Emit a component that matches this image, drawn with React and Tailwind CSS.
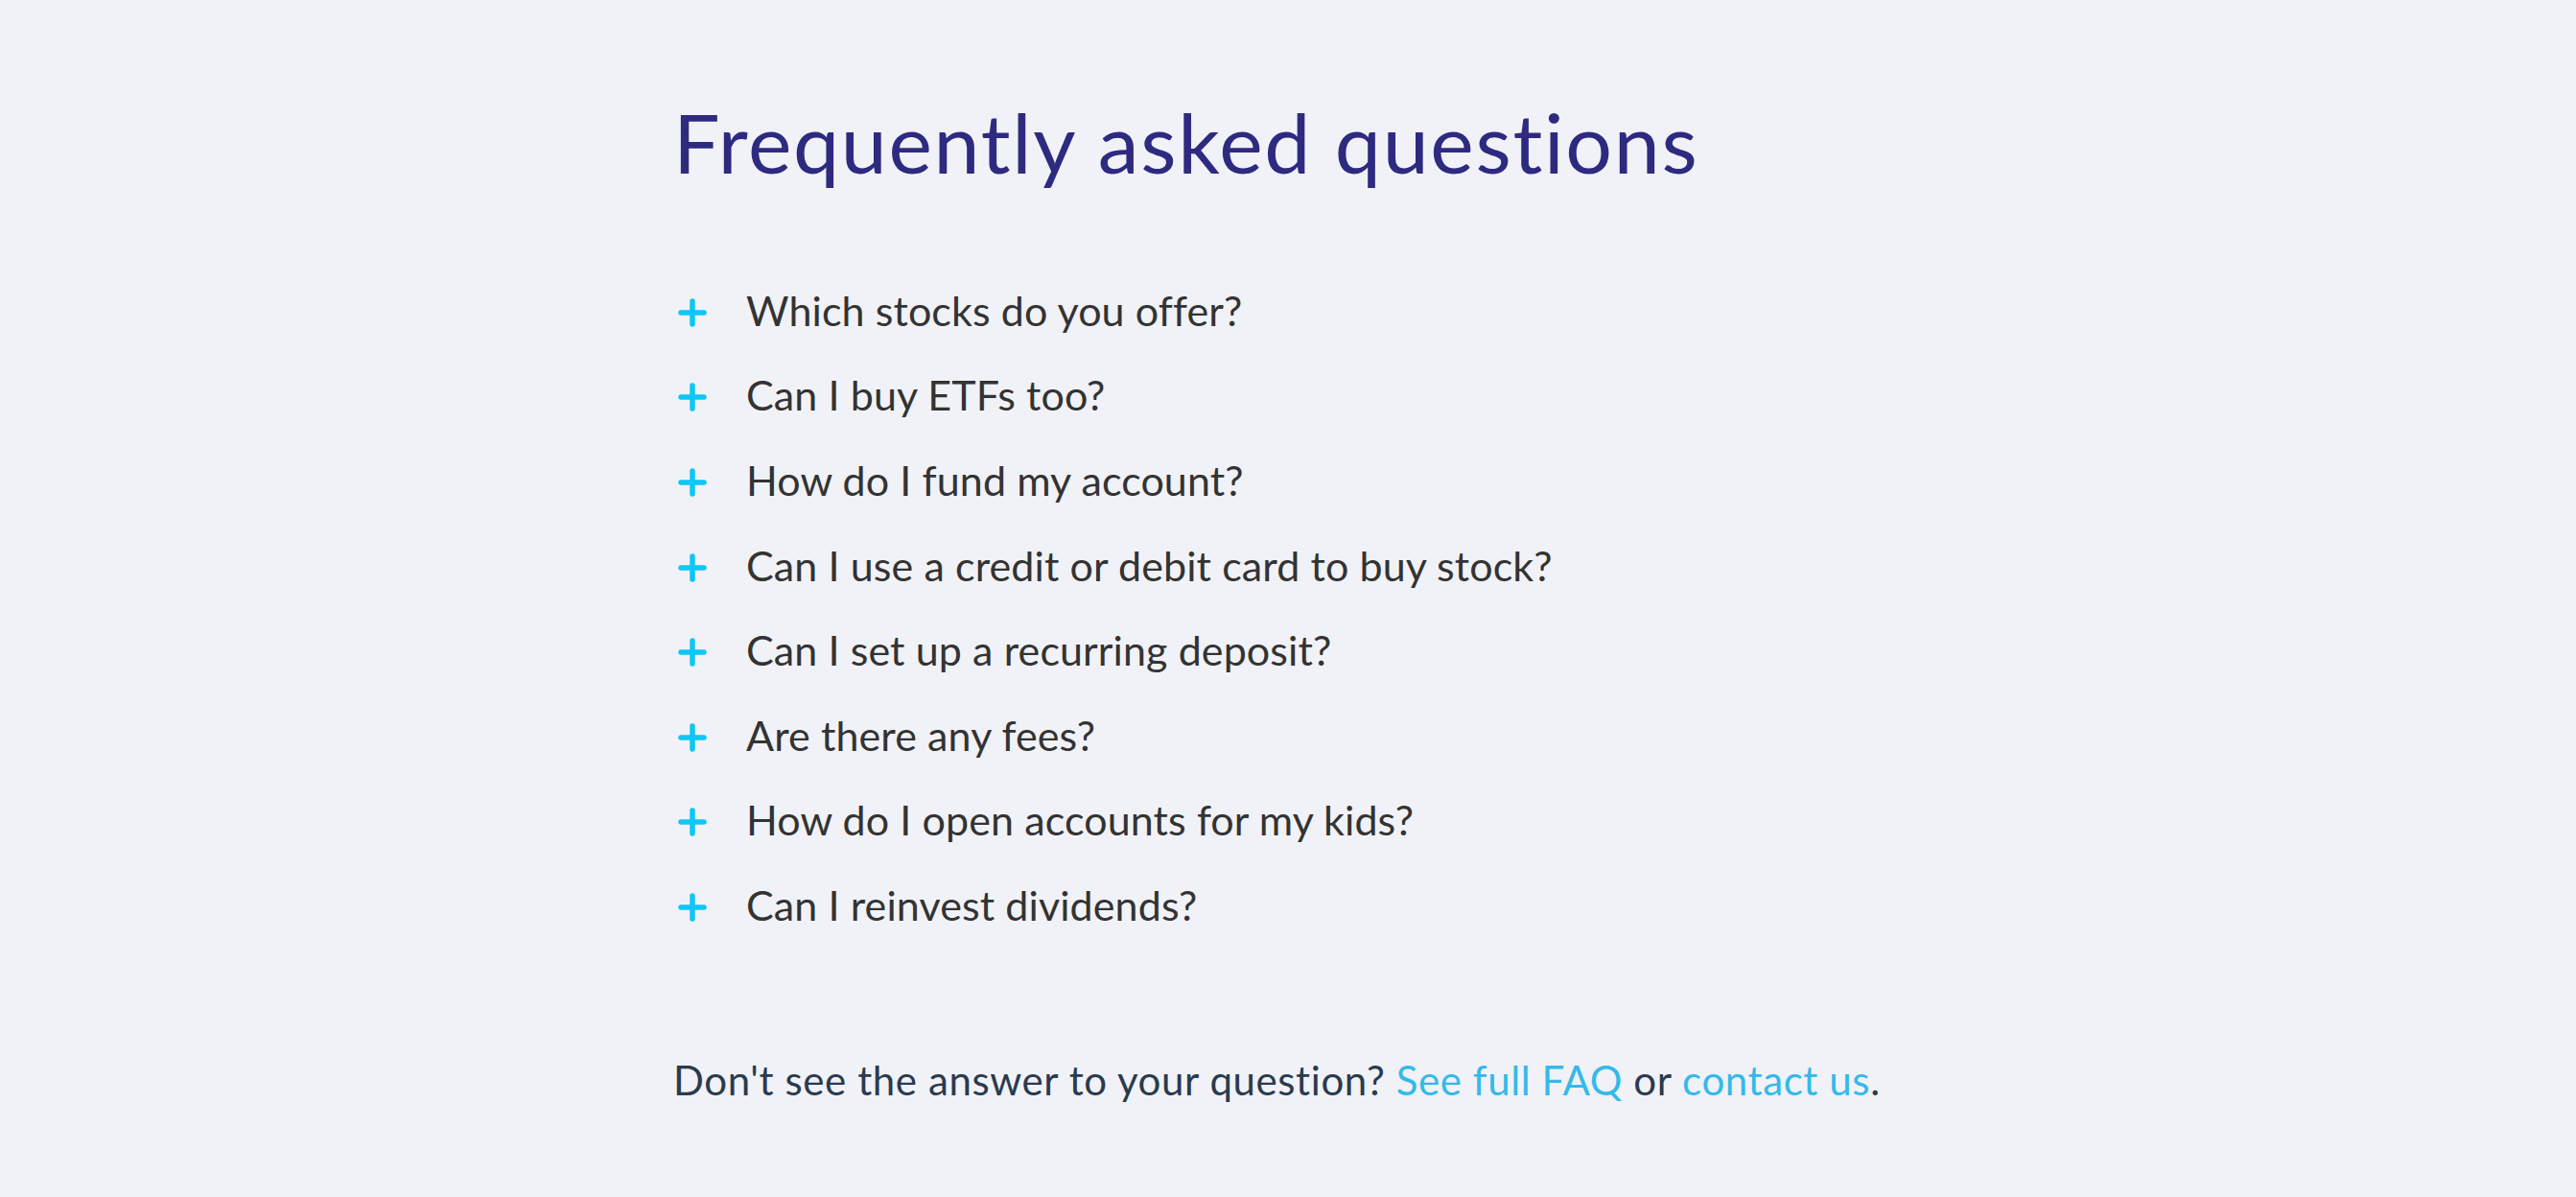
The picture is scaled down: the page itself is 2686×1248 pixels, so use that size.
import React from "react";

const questions = [
  "Which stocks do you offer?",
  "Can I buy ETFs too?",
  "How do I fund my account?",
  "Can I use a credit or debit card to buy stock?",
  "Can I set up a recurring deposit?",
  "Are there any fees?",
  "How do I open accounts for my kids?",
  "Can I reinvest dividends?",
];

const PlusIcon = () => (
  <svg width="30" height="30" viewBox="0 0 30 30" className="ml-[5px] mt-[5px] shrink-0">
    <path
      d="M15 3v24M3 15h24"
      stroke="#0ec6f7"
      strokeWidth="5.5"
      strokeLinecap="round"
      fill="none"
    />
  </svg>
);

const App = () => {
  return (
    <div
      className="min-h-screen w-full bg-[#f1f2f7]"
      style={{ fontFamily: "Lato, 'Open Sans', sans-serif" }}
    >
      <div className="mx-auto w-[1282px] pt-[105px]">
        <h1 className="text-[86px] leading-none font-normal text-[#2e2a80] tracking-[1.7px]">
          Frequently asked questions
        </h1>

        <ul className="mt-[88px] flex flex-col">
          {questions.map((q) => (
            <li key={q} className="flex h-[88.6px] items-center">
              <PlusIcon />
              <span className="ml-[41px] text-[43px] leading-none tracking-[0.1px] text-[#333333]">
                {q}
              </span>
            </li>
          ))}
        </ul>

        <p className="mt-[117px] text-[42px] leading-none tracking-[0.6px] text-[#2b3a4f]">
          Don't see the answer to your question?{" "}
          <a href="#" className="text-[#35b9ea]">
            See full FAQ
          </a>{" "}
          or{" "}
          <a href="#" className="text-[#35b9ea]">
            contact us
          </a>
          .
        </p>
      </div>
    </div>
  );
};

export default App;
